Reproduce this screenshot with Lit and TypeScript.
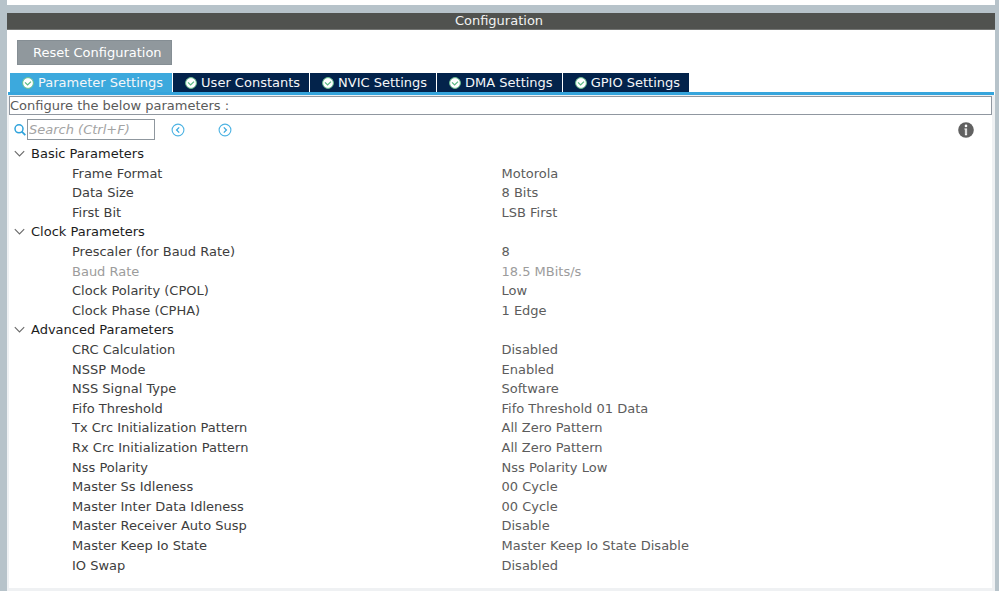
import { LitElement, html, svg, css } from "lit";
import { customElement, state } from "lit/decorators.js";
import { classMap } from "lit/directives/class-map.js";

interface Param {
  name: string;
  value: string;
  readonly?: boolean;
}

interface Group {
  title: string;
  params: Param[];
}

const TABS = ["Parameter Settings", "User Constants", "NVIC Settings", "DMA Settings", "GPIO Settings"];

const GROUPS: Group[] = [
  {
    title: "Basic Parameters",
    params: [
      { name: "Frame Format", value: "Motorola" },
      { name: "Data Size", value: "8 Bits" },
      { name: "First Bit", value: "LSB First" },
    ],
  },
  {
    title: "Clock Parameters",
    params: [
      { name: "Prescaler (for Baud Rate)", value: "8" },
      { name: "Baud Rate", value: "18.5 MBits/s", readonly: true },
      { name: "Clock Polarity (CPOL)", value: "Low" },
      { name: "Clock Phase (CPHA)", value: "1 Edge" },
    ],
  },
  {
    title: "Advanced Parameters",
    params: [
      { name: "CRC Calculation", value: "Disabled" },
      { name: "NSSP Mode", value: "Enabled" },
      { name: "NSS Signal Type", value: "Software" },
      { name: "Fifo Threshold", value: "Fifo Threshold 01 Data" },
      { name: "Tx Crc Initialization Pattern", value: "All Zero Pattern" },
      { name: "Rx Crc Initialization Pattern", value: "All Zero Pattern" },
      { name: "Nss Polarity", value: "Nss Polarity Low" },
      { name: "Master Ss Idleness", value: "00 Cycle" },
      { name: "Master Inter Data Idleness", value: "00 Cycle" },
      { name: "Master Receiver Auto Susp", value: "Disable" },
      { name: "Master Keep Io State", value: "Master Keep Io State Disable" },
      { name: "IO Swap", value: "Disabled" },
    ],
  },
];

const checkIcon = html`<svg class="check" viewBox="0 0 12 12" width="12" height="12" aria-hidden="true">
  <circle cx="6" cy="6" r="5.4" fill="#fff" stroke="#6cc290" stroke-width="1" />
  <path d="M3 5.4 L5.6 7.9 L9 4.6" fill="none" stroke="#5aba83" stroke-width="1.3" />
</svg>`;

const circleIcon = (d: string) => html`<svg viewBox="0 0 14 14" width="14" height="14" aria-hidden="true">
  <circle cx="7" cy="7" r="5.9" fill="none" stroke="#4db3e3" stroke-width="1.1" />
  ${svg`<path d=${d} fill="none" stroke="#3aa9df" stroke-width="1.3" />`}
</svg>`;

@customElement("app-root")
export class AppRoot extends LitElement {
  @state() private tab = 0;
  @state() private closed: number[] = [];

  static styles = css`
    :host {
      display: block;
      background: #b7c3ca;
      font: 13px/16px "DejaVu Sans", Verdana, sans-serif;
      color: #3d3d3d;
    }
    button,
    input {
      font: inherit;
      margin: 0;
      border: 0;
      border-radius: 0;
      padding: 0;
      background: none;
      color: inherit;
    }
    .page {
      box-sizing: border-box;
      min-height: 100vh;
      padding: 0 4px 0 7px;
      display: flex;
      flex-direction: column;
      gap: 8px;
    }
    .above {
      height: 5px;
      background: #fff;
    }
    .panel {
      flex: 1;
      display: flex;
      flex-direction: column;
      background: #fff;
    }
    .title {
      margin: 0;
      padding-right: 4px;
      font: inherit;
      text-align: center;
      color: #f2f2f2;
      background: #50524f;
      border-bottom: 1px solid #747674;
    }
    .actions {
      padding: 10px 10px 8px;
    }
    .reset {
      height: 25px;
      padding: 0 9px 0 15px;
      border: 1px solid #858e94;
      color: #fff;
      background: #90989d;
      display: block;
    }
    .tabs {
      display: flex;
      gap: 1px;
      padding: 0 2px;
      border-bottom: 3px solid #36a5dc;
      margin: 0 1px;
    }
    .tab {
      display: flex;
      align-items: center;
      gap: 4px;
      height: 19px;
      padding: 0 9px 0 12px;
      color: #f4f6f8;
      background: #03234b;
      white-space: nowrap;
    }
    .tab.active {
      background: #3ca9dd;
    }
    .body {
      flex: 1;
      padding: 1px 3px 3px 2px;
      background: #eff1f3;
      display: flex;
      flex-direction: column;
    }
    .hint {
      margin: 0;
      padding: 1px 0 0;
      border: 1px solid #9097a0;
      background: #fff;
      color: #5a5a5a;
    }
    .sheet {
      flex: 1;
      background: #fff;
    }
    .tools {
      display: flex;
      align-items: center;
      padding: 4px 18px 4px 5px;
    }
    .find {
      display: flex;
      align-items: center;
      gap: 1px;
    }
    .search {
      box-sizing: border-box;
      width: 128px;
      height: 21px;
      border: 1px solid #8f979e;
      padding: 0 1px;
      background: #fff;
    }
    .search::placeholder {
      color: #a3a3a3;
      font-style: italic;
      opacity: 1;
    }
    .nav {
      display: flex;
      gap: 33px;
      flex: 1;
      padding-left: 16px;
    }
    .nav button,
    .info {
      display: flex;
    }
    table {
      width: 100%;
      table-layout: fixed;
      border-collapse: collapse;
    }
    .names {
      width: 50%;
    }
    th,
    td {
      padding: 0;
      font-weight: normal;
      text-align: left;
      white-space: nowrap;
    }
    tr {
      height: 20px;
    }
    tr:nth-child(5n + 2),
    tr:nth-child(5n + 4) {
      height: 19px;
    }
    .toggle {
      display: flex;
      align-items: center;
      gap: 6px;
      padding-left: 5px;
      color: #1c1c1c;
    }
    .name {
      padding-left: 63px;
    }
    .value {
      padding-left: 1px;
      color: #5c5c5c;
    }
    .readonly .name,
    .readonly .value {
      color: #9c9c9c;
    }
    .closed svg {
      transform: rotate(-90deg);
    }
  `;

  private toggle(i: number) {
    this.closed = this.closed.includes(i) ? this.closed.filter((n) => n !== i) : [...this.closed, i];
  }

  private renderGroup(group: Group, i: number) {
    const closed = this.closed.includes(i);
    return html`
      <tr>
        <th colspan="2" scope="colgroup">
          <button
            class=${classMap({ toggle: true, closed })}
            aria-expanded=${closed ? "false" : "true"}
            @click=${() => this.toggle(i)}
          >
            <svg viewBox="0 0 11 8" width="11" height="8" aria-hidden="true">
              <path d="M0.8 1.2 L5.5 6 L10.2 1.2" fill="none" stroke="#6a6a6a" stroke-width="1.1" />
            </svg>
            ${group.title}
          </button>
        </th>
      </tr>
      ${closed
        ? null
        : group.params.map(
            (p) => html`<tr class=${classMap({ readonly: !!p.readonly })}>
              <th class="name" scope="row">${p.name}</th>
              <td class="value">${p.value}</td>
            </tr>`
          )}
    `;
  }

  render() {
    return html`
      <div class="page">
        <div class="above"></div>
        <main class="panel">
          <h1 class="title">Configuration</h1>
          <div class="actions"><button class="reset">Reset Configuration</button></div>
          <div class="tabs" role="tablist">
            ${TABS.map(
              (t, i) => html`<button
                class=${classMap({ tab: true, active: i === this.tab })}
                role="tab"
                aria-selected=${i === this.tab ? "true" : "false"}
                @click=${() => (this.tab = i)}
              >
                ${checkIcon}${t}
              </button>`
            )}
          </div>
          <section class="body">
            <p class="hint">Configure the below parameters :</p>
            <div class="sheet">
              <div class="tools">
                <label class="find">
                  <svg viewBox="0 0 12 12" width="12" height="12" role="img" aria-label="Search">
                    <circle cx="5" cy="4.8" r="4" fill="none" stroke="#2fa3dc" stroke-width="1.5" />
                    <path d="M7.8 7.6 L11.3 11.1" stroke="#2fa3dc" stroke-width="1.8" />
                  </svg>
                  <input class="search" type="text" placeholder="Search (Ctrl+F)" />
                </label>
                <div class="nav">
                  <button aria-label="Previous match">${circleIcon("M8.2 4.4 L5.6 7 L8.2 9.6")}</button>
                  <button aria-label="Next match">${circleIcon("M5.8 4.4 L8.4 7 L5.8 9.6")}</button>
                </div>
                <button class="info" aria-label="Information">
                  <svg viewBox="0 0 16 16" width="16" height="16" aria-hidden="true">
                    <circle cx="8" cy="8" r="7.8" fill="#616161" />
                    <circle cx="8" cy="3.9" r="1.3" fill="#fff" />
                    <path d="M6.4 6.4 H9.1 V13.2 H6.9 V7.4 H6.4 Z" fill="#fff" />
                    <path d="M8 7.2 V12.4" stroke="#8a8a8a" stroke-width="0.6" />
                  </svg>
                </button>
              </div>
              <table>
                <colgroup>
                  <col class="names" />
                  <col />
                </colgroup>
                <tbody>
                  ${GROUPS.map((g, i) => this.renderGroup(g, i))}
                </tbody>
              </table>
            </div>
          </section>
        </main>
      </div>
    `;
  }
}
